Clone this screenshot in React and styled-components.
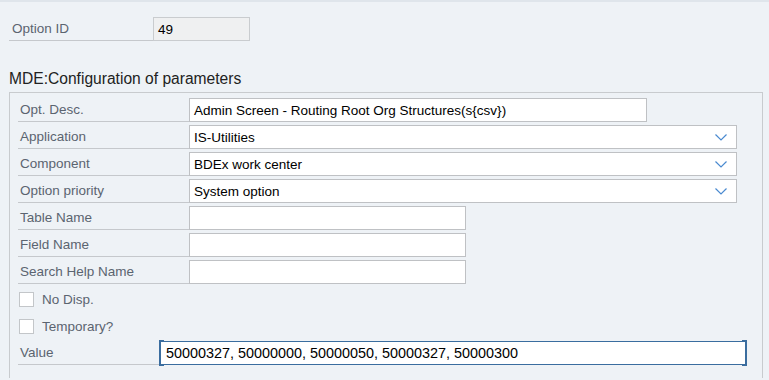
import React from "react";
import styled, { createGlobalStyle } from "styled-components";

const GlobalStyle = createGlobalStyle`
  html, body {
    margin: 0;
    padding: 0;
    background: #eef2f6;
  }
  body {
    font-family: "Liberation Sans", Arial, sans-serif;
  }
`;

const Page = styled.div`
  width: 769px;
  height: 380px;
  box-sizing: border-box;
  border-top: 2px solid #dfe5eb;
  background: #eef2f6;
  overflow: hidden;
`;

const IdRow = styled.div`
  display: flex;
  margin: 15px 0 0 9px;
  height: 24px;
`;

const Label = styled.div`
  box-sizing: border-box;
  width: ${(p) => p.$width}px;
  height: 24px;
  padding-left: ${(p) => p.$pad || 2}px;
  border-bottom: 1px solid #c5c8cc;
  display: flex;
  align-items: center;
  font-size: 13.5px;
  color: #5b6470;
`;

const Input = styled.div`
  box-sizing: border-box;
  width: ${(p) => p.$width}px;
  height: 24px;
  padding: 0 4px;
  border: 1px solid ${(p) => (p.$readonly ? "#c9cccf" : "#bfc1c4")};
  background: ${(p) => (p.$readonly ? "#eff0f1" : "#ffffff")};
  display: flex;
  align-items: center;
  justify-content: space-between;
  font-size: 13.5px;
  color: #000;
  white-space: nowrap;
`;

const FocusInput = styled(Input)`
  position: relative;
  border-color: #3a6d9f;
  font-size: 14.4px;
  padding-left: 5px;

  &::before,
  &::after {
    content: "";
    position: absolute;
    top: -2px;
    bottom: -2px;
    width: 3px;
    border: 1px solid #3a6d9f;
  }
  &::before {
    left: -2px;
    border-right: none;
    border-left-width: 2px;
    clip-path: polygon(0 0, 100% 0, 100% 3px, 2px 3px, 2px calc(100% - 3px), 100% calc(100% - 3px), 100% 100%, 0 100%);
  }
  &::after {
    right: -2px;
    border-left: none;
    border-right-width: 2px;
    clip-path: polygon(0 0, 100% 0, 100% 100%, 0 100%, 0 calc(100% - 3px), calc(100% - 2px) calc(100% - 3px), calc(100% - 2px) 3px, 0 3px);
  }
`;

const Title = styled.div`
  margin: 28px 0 0 9px;
  font-size: 15.6px;
  color: #222;
  line-height: 19px;
`;

const Group = styled.div`
  margin: 4px 6px 0 9px;
  height: 286px;
  box-sizing: border-box;
  border: 1px solid #c8cbce;
  border-bottom: none;
  padding: 5px 8px 0 8px;
  display: flex;
  flex-direction: column;
  gap: 3px;
`;

const Row = styled.div`
  display: flex;
  height: 24px;
  align-items: ${(p) => (p.$check ? "center" : "stretch")};
`;

const Box = styled.span`
  box-sizing: border-box;
  width: 15px;
  height: 15px;
  margin-left: 1px;
  background: #fff;
  border: 1px solid #c3c6c9;
`;

const CheckText = styled.span`
  margin-left: 8px;
  font-size: 13.5px;
  color: #5b6470;
`;

const Chevron = () => (
  <svg width="12" height="7" viewBox="0 0 12 7" style={{ marginRight: 5 }}>
    <path d="M0.5 0.5 L6 6 L11.5 0.5" fill="none" stroke="#4a8ad0" strokeWidth="1.2" />
  </svg>
);

const fields = [
  { label: "Opt. Desc.", value: "Admin Screen - Routing Root Org Structures(s{csv})", width: 458 },
  { label: "Application", value: "IS-Utilities", width: 548, select: true },
  { label: "Component", value: "BDEx work center", width: 548, select: true },
  { label: "Option priority", value: "System option", width: 548, select: true },
  { label: "Table Name", value: "", width: 277 },
  { label: "Field Name", value: "", width: 277 },
  { label: "Search Help Name", value: "", width: 277 },
];

export default function App() {
  return (
    <Page>
      <GlobalStyle />
      <IdRow>
        <Label $width={144} $pad={3}>Option ID</Label>
        <Input $width={97} $readonly>49</Input>
      </IdRow>
      <Title>MDE:Configuration of parameters</Title>
      <Group>
        {fields.map((f) => (
          <Row key={f.label}>
            <Label $width={171}>{f.label}</Label>
            <Input $width={f.width}>
              <span>{f.value}</span>
              {f.select && <Chevron />}
            </Input>
          </Row>
        ))}
        <Row $check>
          <Box />
          <CheckText>No Disp.</CheckText>
        </Row>
        <Row $check>
          <Box />
          <CheckText>Temporary?</CheckText>
        </Row>
        <Row>
          <Label $width={142}>Value</Label>
          <FocusInput $width={586}>
            50000327, 50000000, 50000050, 50000327, 50000300
          </FocusInput>
        </Row>
      </Group>
    </Page>
  );
}
